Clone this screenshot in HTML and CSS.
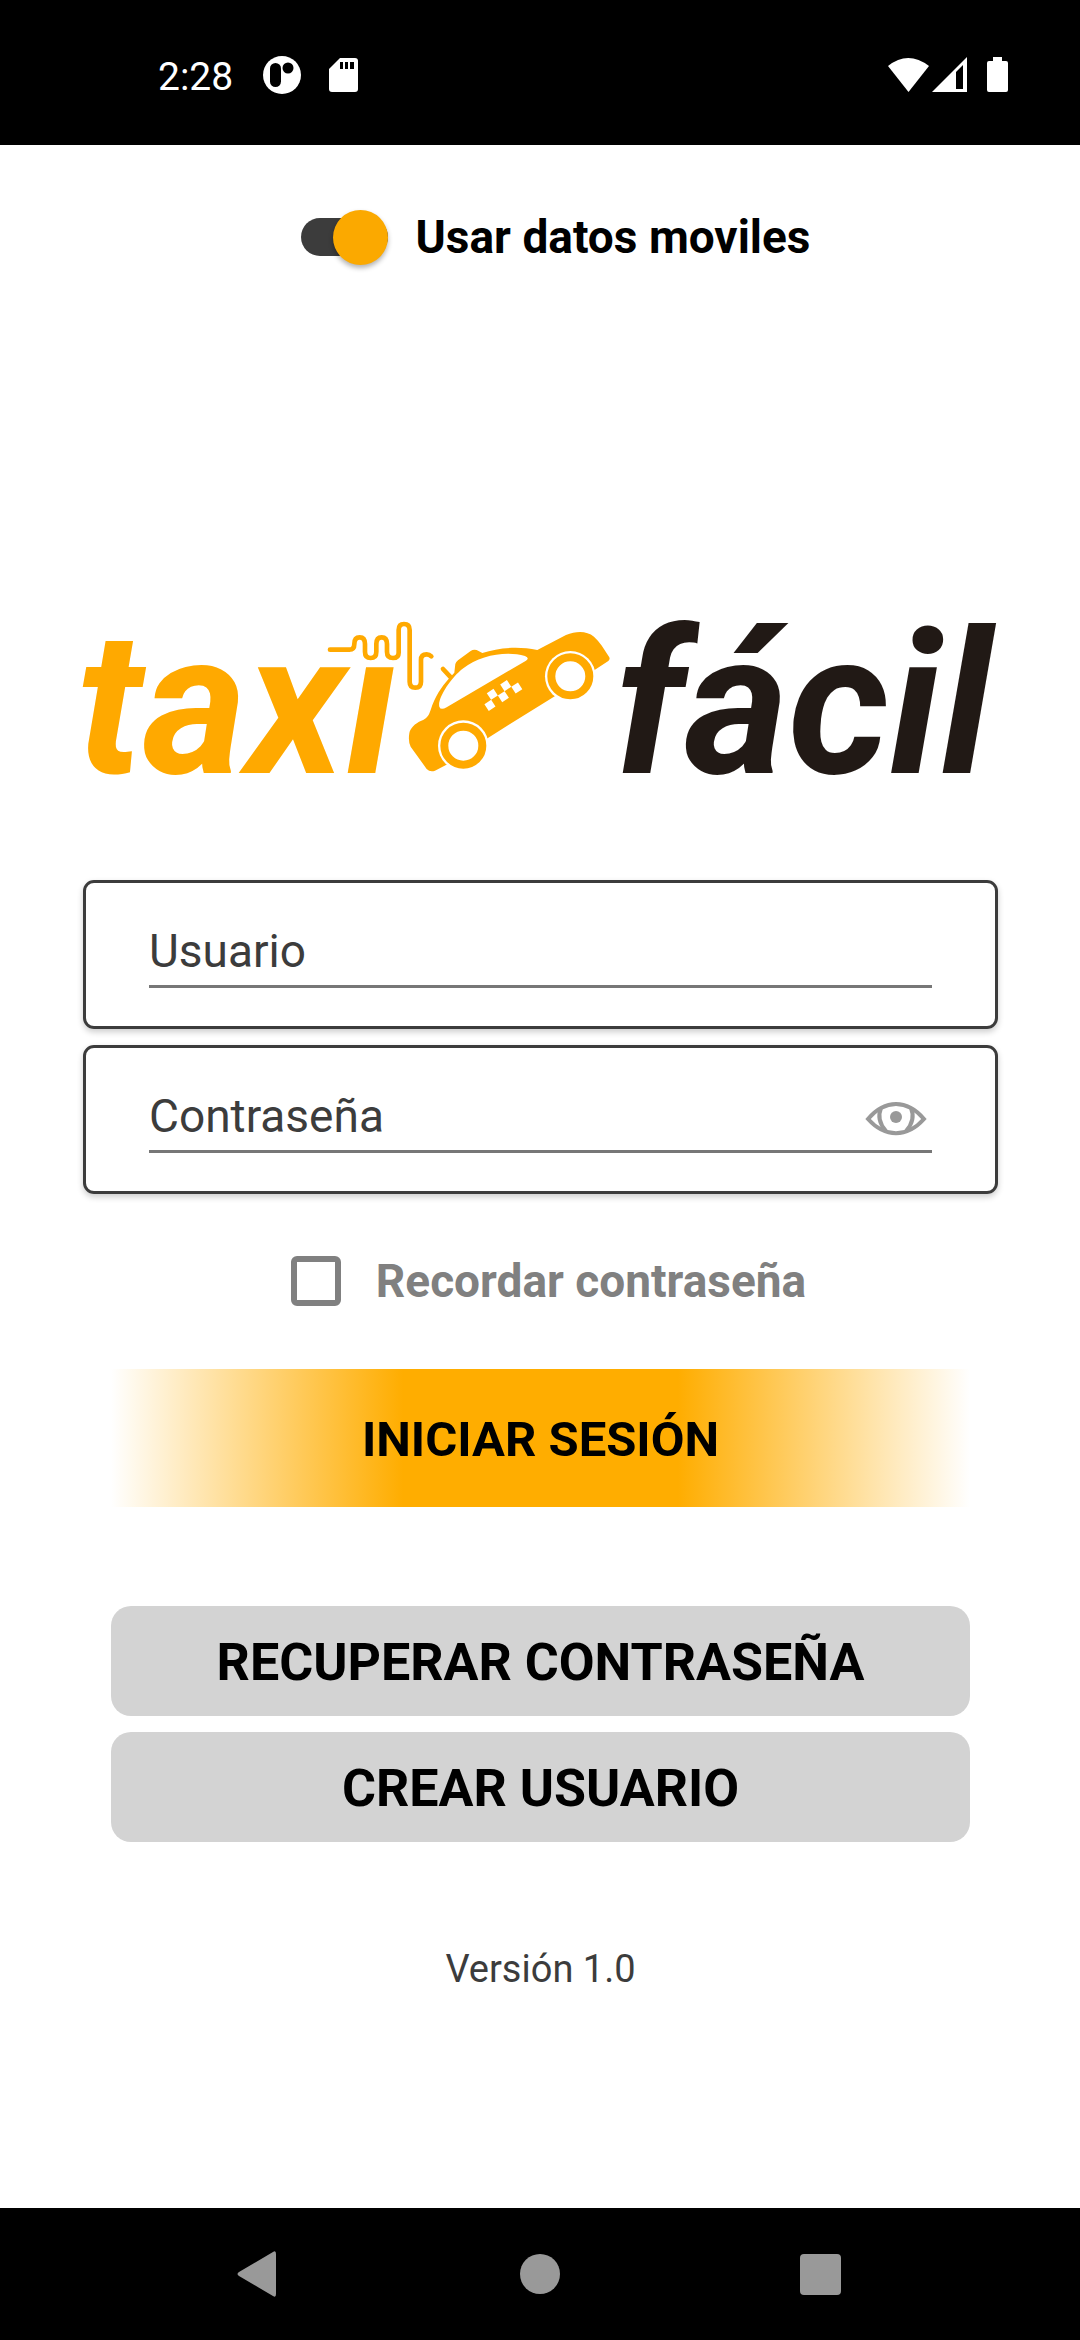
FILE: index.html
```html
<!DOCTYPE html>
<html lang="es">
<head>
<meta charset="utf-8">
<meta name="viewport" content="width=device-width, initial-scale=1">
<title>Taxi Fácil</title>
<link rel="stylesheet" href="styles.css">
</head>
<body>
<header class="status">
  <div class="status-left">
    <span class="clock">2:28</span>
    <svg class="app-dot" width="38" height="38" viewBox="0 0 38 38" aria-hidden="true">
      <circle cx="19" cy="19" r="19" fill="#fff"/>
      <rect x="7" y="7" width="11" height="24" rx="5.500"/>
      <circle cx="25" cy="12" r="5.500"/>
    </svg>
    <svg width="29" height="36" viewBox="0 0 29 36" aria-hidden="true">
      <path fill="#fff" d="M11 1H26Q29 1 29 4V32Q29 35 26 35H3Q0 35 0 32V12Z"/>
      <path d="M11 5h3v7h-3zM16 5h3v7h-3zM21 5h4v7h-4z"/>
    </svg>
  </div>
  <div class="status-right">
    <svg width="41" height="36" viewBox="0 0 41 36" aria-hidden="true">
      <path fill="#fff" d="M0 9Q20-7 41 9L20.500 35Z"/>
    </svg>
    <svg class="signal" width="35" height="36" viewBox="0 0 35 36" aria-hidden="true">
      <path fill="#fff" d="M35 0V35H0Z"/>
      <path d="M24 15L31 8V32H24Z"/>
    </svg>
    <svg width="21" height="36" viewBox="0 0 21 36" aria-hidden="true">
      <path fill="#fff" d="M6 0h9v4h4q2 0 2 2v27q0 2-2 2H2q-2 0-2-2V6q0-2 2-2h4z"/>
    </svg>
  </div>
</header>

<main class="screen">
  <label class="option mobile-data">
    <input class="switch" type="checkbox" role="switch" checked>
    <span>Usar datos moviles</span>
  </label>

  <svg class="logo" viewBox="0 0 915 170" role="img" aria-label="taxi fácil">
    <text class="logo-text taxi" x="-6" y="158">taxı</text>
    <text class="logo-text facil" x="532" y="158">fácil</text>
    <g transform="translate(227 -15) scale(.3333)">
      <path class="wire" d="M60 149H118Q133 149 133 132Q133 112 149 112Q165 112 165 132V155Q165 174 182 174Q199 174 199 155V132Q199 112 215 112Q231 112 231 132V155Q231 174 249 174Q266 174 266 158V90Q266 72 282 72Q299 72 299 90V245Q299 263 316 263Q333 263 333 245V180Q333 163 350 163Q358 163 364 169"/>
      <path class="wire" d="M399 207L426 236"/>
      <path class="body" d="M298 400C300 385 315 370 334 362C350 356 356 348 362 330C375 290 395 260 415 238L433 218L436 192Q438 186 444 181L482 153Q490 147 500 150L517 159C565 143 625 138 682 150L768 105C800 92 830 92 852 110C868 124 882 146 898 172Q901 178 895 183L855 209L732 290L535 413L408 495L375 512Q360 517 350 507L302 440Q294 425 298 400Z"/>
      <path class="cut" d="M388 320C382 298 420 235 460 205C510 165 590 152 645 168Q660 174 648 182L410 322Q392 332 388 320Z"/>
      <g class="cut" transform="translate(547 283) rotate(-33)">
        <path d="M-12-12h24v24h-24zM36-12h24v24h-24zM12 12h24v24h-24zM60 12h24v24h-24zM-36 12h24v24h-24z"/>
      </g>
      <circle class="cut" cx="460" cy="437" r="76"/>
      <circle class="tyre" cx="460" cy="437" r="57"/>
      <circle class="cut" cx="781" cy="229" r="76"/>
      <circle class="tyre" cx="781" cy="229" r="57"/>
    </g>
  </svg>

  <form class="login" onsubmit="return false">
    <div class="card">
      <div class="field">
        <input type="text" placeholder="Usuario" aria-label="Usuario" autocomplete="username">
      </div>
    </div>
    <div class="card">
      <div class="field">
        <input type="password" placeholder="Contraseña" aria-label="Contraseña" autocomplete="current-password">
        <button class="reveal" type="button" aria-label="Mostrar contraseña">
          <svg width="62" height="36" viewBox="0 0 62 36" aria-hidden="true">
            <g fill="none" stroke="#999" stroke-width="4">
              <path d="M3 19C20-1 42-1 59 19C42 38 20 38 3 19Z"/>
              <path d="M16 8Q11 20 21 31M46 8Q51 20 41 31"/>
            </g>
            <circle cx="31" cy="17" r="6" fill="#999"/>
          </svg>
        </button>
      </div>
    </div>

    <label class="option remember">
      <input class="tick" type="checkbox">
      <span>Recordar contraseña</span>
    </label>

    <button class="submit" type="submit">INICIAR SESIÓN</button>
  </form>

  <div class="actions">
    <button class="secondary" type="button">RECUPERAR CONTRASEÑA</button>
    <button class="secondary" type="button">CREAR USUARIO</button>
  </div>

  <p class="version">Versión 1.0</p>
</main>

<nav class="system-nav" aria-label="Sistema">
  <button type="button" aria-label="Atrás">
    <svg width="46" height="46" viewBox="0 0 46 46" aria-hidden="true"><path fill="#999" d="M2 21L36 1Q39-1 39 3V43Q39 47 36 45L2 25Q-1 23 2 21Z"/></svg>
  </button>
  <button type="button" aria-label="Inicio">
    <svg width="46" height="46" viewBox="0 0 46 46" aria-hidden="true"><circle cx="23" cy="23" r="20" fill="#999"/></svg>
  </button>
  <button type="button" aria-label="Recientes">
    <svg width="46" height="46" viewBox="0 0 46 46" aria-hidden="true"><rect x="3" y="3" width="41" height="41" rx="4" fill="#999"/></svg>
  </button>
</nav>
</body>
</html>
```
FILE: styles.css
```css
* {
  box-sizing: border-box;
}

body {
  margin: 0;
  min-height: 100vh;
  display: flex;
  flex-direction: column;
  background: #fff;
  color: #000;
  font-family: Roboto, sans-serif;
}

button,
input {
  margin: 0;
  padding: 0;
  border: 0;
  background: none;
  font: inherit;
  color: inherit;
}

svg {
  display: block;
}

/* System bars */
.status {
  display: flex;
  justify-content: space-between;
  align-items: center;
  height: 145px;
  padding: 5px 72px 0 158px;
  background: #000;
  color: #fff;
}

.status-left,
.status-right {
  display: flex;
  align-items: center;
}

.clock {
  padding-top: 4px;
  font-size: 39px;
  line-height: 46px;
}

.app-dot {
  margin: 0 28px 0 30px;
}

.signal {
  margin: 0 20px 0 3px;
}

.system-nav {
  display: flex;
  justify-content: center;
  align-items: center;
  gap: 234px;
  height: 132px;
  background: #000;
}

/* Screen */
.screen {
  flex: 1;
  padding: 64px 82px 64px 83px;
}

.option {
  display: flex;
  justify-content: center;
  align-items: center;
  font-size: 46px;
  font-weight: 700;
  line-height: 56px;
}

.mobile-data {
  gap: 28px;
  padding-left: 30px;
}

.switch {
  appearance: none;
  display: flex;
  align-items: center;
  justify-content: flex-end;
  width: 87px;
  height: 38px;
  border-radius: 19px;
  background: #3c3c3c;
}

.switch::before {
  content: "";
  width: 55px;
  height: 55px;
  flex: none;
  border-radius: 50%;
  background: #fba900;
  box-shadow: 0 3px 5px rgba(0, 0, 0, 0.3);
}

.switch:not(:checked) {
  justify-content: flex-start;
}

.logo {
  width: 100%;
  margin-top: 350px;
  overflow: visible;
}

.logo-text {
  font-size: 200px;
  font-style: italic;
  font-weight: 700;
}

.taxi,
.body {
  fill: #ffa900;
}

.facil {
  fill: #211915;
}

.wire,
.tyre {
  fill: none;
  stroke: #ffa900;
}

.wire {
  stroke-width: 14;
  stroke-linecap: round;
}

.tyre {
  stroke-width: 24;
}

.cut {
  fill: #fff;
}

/* Login form */
.login {
  display: flex;
  flex-direction: column;
  gap: 16px;
  margin-top: 95px;
}

.card {
  padding: 40px 63px 38px;
  border: 3px solid #3c3c3c;
  border-radius: 11px;
  box-shadow: 0 3px 6px rgba(0, 0, 0, 0.2);
}

.field {
  display: flex;
  align-items: flex-end;
  padding-bottom: 6px;
  border-bottom: 3px solid #777;
}

.field input {
  flex: 1;
  min-width: 0;
  height: 56px;
  outline: 0;
  color: #3c3c3c;
  font-size: 46px;
  line-height: 56px;
}

.field input::placeholder {
  color: #3c3c3c;
  opacity: 1;
}

.reveal {
  padding: 0 5px 8px 0;
}

.remember {
  gap: 35px;
  margin-top: 43px;
  padding-left: 16px;
  color: #808080;
}

.tick {
  appearance: none;
  width: 50px;
  height: 50px;
  border: 6px solid #808080;
  border-radius: 6px;
}

.tick:checked {
  background: #808080;
}

.submit {
  height: 138px;
  margin: 44px 28px 0;
  padding-top: 3px;
  background: linear-gradient(90deg, #fff, #ffad00 34%, #ffad00 66%, #fff);
  font-size: 49px;
  font-weight: 700;
}

.actions {
  display: flex;
  flex-direction: column;
  gap: 16px;
  margin: 99px 28px 0;
}

.secondary {
  height: 110px;
  padding-top: 3px;
  border-radius: 20px;
  background: #d3d3d3;
  font-size: 52px;
  font-weight: 700;
}

.version {
  margin: 104px 0 0;
  color: #3c3c3c;
  font-size: 38px;
  line-height: 46px;
  text-align: center;
}
```
